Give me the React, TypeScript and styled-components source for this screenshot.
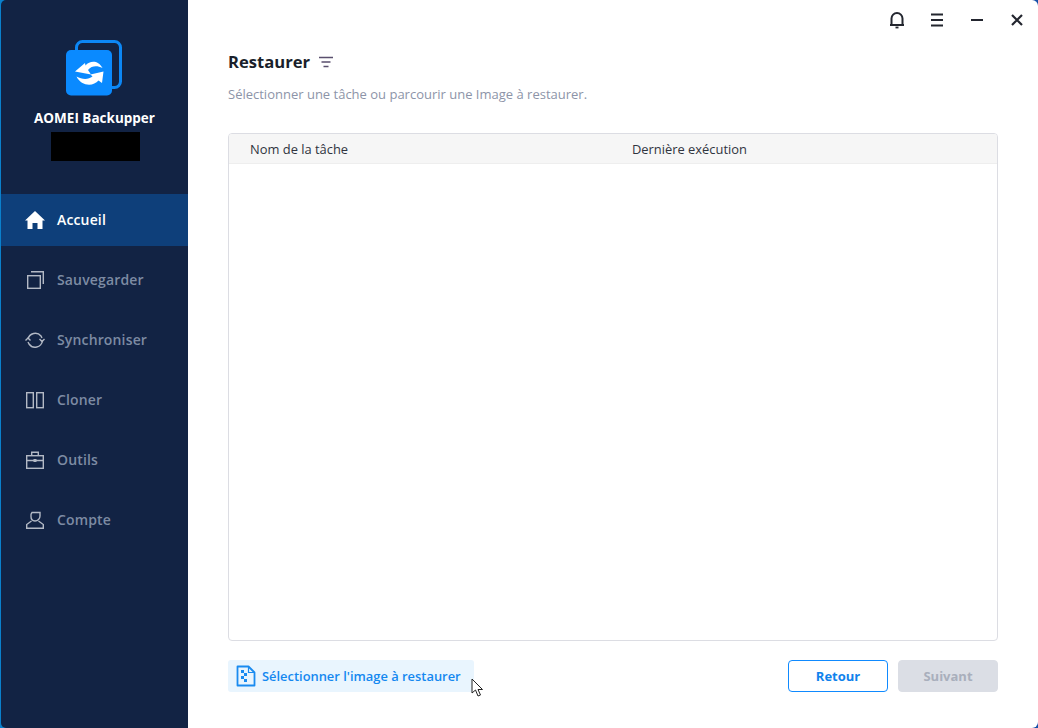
import React from "react";
import styled, { createGlobalStyle } from "styled-components";

const Global = createGlobalStyle`
  html, body { margin: 0; padding: 0; background: #0e4f96; }
  #root { width: 1038px; height: 728px; overflow: hidden; }
  * { box-sizing: border-box; }
`;

const Windowed = styled.div`
  width: 1038px;
  height: 728px;
  display: flex;
  font-family: "Open Sans", "Noto Sans", sans-serif;
  background: linear-gradient(90deg, #0a80cc 0%, #1650a8 100%);
`;

const Sidebar = styled.aside`
  width: 187px;
  height: 728px;
  margin-left: 1px;
  flex: none;
  background: #122344;
  border-top-left-radius: 5px;
  border-bottom-left-radius: 5px;
  display: flex;
  flex-direction: column;
`;

const Brand = styled.div`
  height: 194px;
  display: flex;
  flex-direction: column;
  align-items: center;
  padding-top: 40px;
`;

const LogoMark = styled.svg`
  width: 56px;
  height: 56px;
  flex: none;
  margin-right: 1px;
`;

const BrandName = styled.div`
  margin-top: 13px;
  color: #fff;
  font-size: 13.500px;
  line-height: 18px;
  font-weight: 700;
  white-space: nowrap;
`;

const Redacted = styled.div`
  width: 89px;
  height: 29px;
  margin-top: 5px;
  margin-left: 2px;
  background: #000;
`;

const Nav = styled.nav`
  display: flex;
  flex-direction: column;
  gap: 8px;
`;

const NavItem = styled.div<{ $active?: boolean }>`
  height: 52px;
  display: flex;
  align-items: center;
  padding-left: 24px;
  gap: 12px;
  background: ${(p) => (p.$active ? "#0e3f7a" : "transparent")};
  color: ${(p) => (p.$active ? "#ffffff" : "#7d8ba3")};
  font-size: 14px;
  letter-spacing: 0.150px;
  font-weight: 600;
`;

const NavLabel = styled.span`
  margin-bottom: 2px;
`;

const NavIcon = styled.svg`
  width: 20px;
  height: 20px;
  flex: none;
  fill: none;
  stroke: #b3b9c5;
  stroke-width: 1.400;
`;

const Main = styled.main`
  flex: 1;
  min-width: 0;
  height: 728px;
  background: #fff;
  border-radius: 0 6px 6px 0;
  display: flex;
  flex-direction: column;
  padding: 0 40px 36px 40px;
`;

const TitleBar = styled.div`
  height: 40px;
  margin-right: -40px;
  flex: none;
  display: flex;
  justify-content: flex-end;
  align-items: center;
  padding-right: 11px;
  gap: 20px;
`;

const BarIcon = styled.svg`
  width: 20px;
  height: 20px;
  fill: none;
  stroke: #23262f;
  stroke-width: 2;
`;

const Heading = styled.div`
  display: flex;
  align-items: center;
  gap: 9px;
  height: 24px;
  margin-top: 10px;
`;

const Title = styled.h1`
  margin: 0;
  font-size: 16.600px;
  line-height: 24px;
  font-weight: 700;
  color: #1a1f2b;
`;

const Subtitle = styled.p`
  margin: 11px 0 0;
  font-size: 13px;
  line-height: 18px;
  color: #8d94a8;
`;

const TableBox = styled.div`
  margin-top: 30px;
  flex: 1;
  min-height: 0;
  border: 1px solid #dcdde3;
  border-radius: 4px;
  display: flex;
  flex-direction: column;
`;

const TableHead = styled.div`
  height: 30px;
  flex: none;
  display: grid;
  grid-template-columns: 382px 1fr;
  align-items: center;
  padding-left: 21px;
  background: #f6f6f6;
  border-bottom: 1px solid #eeeeee;
  border-radius: 3px 3px 0 0;
  font-size: 12.900px;
  color: #30343e;
`;

const Footer = styled.div`
  margin-top: 19px;
  height: 32px;
  flex: none;
  display: flex;
  align-items: center;
`;

const ImageButton = styled.div`
  position: relative;
  width: 246px;
  height: 32px;
  display: flex;
  align-items: center;
  gap: 6px;
  padding-left: 8px;
  background: #e9f5fe;
  border-radius: 3px;
  color: #1488f0;
  font-size: 12.900px;
  font-weight: 600;
  white-space: nowrap;
`;

const Cursor = styled.svg`
  position: absolute;
  left: 243px;
  top: 18px;
  width: 14px;
  height: 20px;
`;

const Spacer = styled.div`
  flex: 1;
`;

const ActionButton = styled.div<{ $disabled?: boolean }>`
  width: 100px;
  height: 32px;
  margin-left: 10px;
  display: flex;
  align-items: center;
  justify-content: center;
  border-radius: 4px;
  font-size: 13px;
  font-weight: 700;
  border: 1px solid ${(p) => (p.$disabled ? "#dbdee5" : "#0f8aff")};
  background: ${(p) => (p.$disabled ? "#dbdee5" : "#fff")};
  color: ${(p) => (p.$disabled ? "#a9afbc" : "#0f82ec")};
`;

export default function App() {
  return (
    <Windowed>
      <Global />
      <Sidebar>
        <Brand>
          <LogoMark viewBox="0 0 56 56">
            <rect x="10.500" y="1.500" width="44" height="46" rx="6" fill="none" stroke="#0c87f5" strokeWidth="3" />
            <rect x="0" y="10" width="46" height="45.500" rx="5" fill="#0a8aff" />
            <path
              d="M9 31.500 L19 23 L19.500 25.500 C24 20.500 32 20 36.500 28 C31 25.500 26 25.500 22 30 L25 34.500 Z"
              fill="#fff"
            />
            <path
              d="M37.500 31.500 L36 43 L32.500 40.500 C27 47 15 46 10.500 36.500 C16 39.500 22 40 26.500 36.500 L24.500 34.500 Z"
              fill="#fff"
            />
          </LogoMark>
          <BrandName>AOMEI Backupper</BrandName>
          <Redacted />
        </Brand>
        <Nav>
          <NavItem $active>
            <NavIcon viewBox="0 0 20 20">
              <path
                d="M10 1 L20 10.500 H17.500 V19 H12.500 V13 H7.500 V19 H2.500 V10.500 H0 Z"
                fill="#fff"
                stroke="none"
              />
            </NavIcon>
            <NavLabel>Accueil</NavLabel>
          </NavItem>
          <NavItem>
            <NavIcon viewBox="0 0 20 20">
              <rect x="2.700" y="5.700" width="12.600" height="12.600" />
              <path d="M6 1.700 H18.300 V14" />
            </NavIcon>
            <NavLabel>Sauvegarder</NavLabel>
          </NavItem>
          <NavItem>
            <NavIcon viewBox="0 0 20 20">
              <path d="M3 9 A7.500 7.500 0 0 1 16 6 L17 8" />
              <path d="M17.500 11 A7.500 7.500 0 0 1 4 14 L3 12" />
              <path d="M0.500 10.500 L3 8 L5.500 10.500 M14.500 9 L17 11.500 L19.500 9" />
            </NavIcon>
            <NavLabel>Synchroniser</NavLabel>
          </NavItem>
          <NavItem>
            <NavIcon viewBox="0 0 20 20">
              <rect x="1.700" y="2.700" width="6.600" height="15" />
              <rect x="11.700" y="2.700" width="6.600" height="15" />
            </NavIcon>
            <NavLabel>Cloner</NavLabel>
          </NavItem>
          <NavItem>
            <NavIcon viewBox="0 0 20 20">
              <rect x="1.700" y="5.700" width="16.600" height="12.600" />
              <path d="M6.700 5.500 V2.200 H13.300 V5.500 M1.700 10.500 H18.300" />
              <rect x="8.500" y="9" width="3" height="3" fill="#b3b9c5" stroke="none" />
            </NavIcon>
            <NavLabel>Outils</NavLabel>
          </NavItem>
          <NavItem>
            <NavIcon viewBox="0 0 20 20">
              <path d="M7 2.500 H15 V6 A5 5 0 0 1 10 11 A4.500 4.500 0 0 1 6 6.500 A4.500 4.500 0 0 1 7 2.500 Z" />
              <path d="M6.500 11 L1.700 14.500 V18.300 H18.300 V14.500 L13.500 11" />
            </NavIcon>
            <NavLabel>Compte</NavLabel>
          </NavItem>
        </Nav>
      </Sidebar>
      <Main>
        <TitleBar>
          <BarIcon viewBox="0 0 20 20">
            <path d="M4.500 15 V8.500 A5.500 5.500 0 0 1 15.500 8.500 V15" strokeWidth="2" />
            <path d="M3 15 H17" strokeWidth="2" />
            <path d="M8.500 17.500 H11.500" strokeWidth="1.800" />
          </BarIcon>
          <BarIcon viewBox="0 0 20 20">
            <path d="M4 4.500 H16 M4 10 H16 M4 15.500 H16" />
          </BarIcon>
          <BarIcon viewBox="0 0 20 20">
            <path d="M4 10 H16" />
          </BarIcon>
          <BarIcon viewBox="0 0 20 20">
            <path d="M5 5 L15 15 M15 5 L5 15" strokeWidth="2.200" />
          </BarIcon>
        </TitleBar>
        <Heading>
          <Title>Restaurer</Title>
          <svg width="14" height="12" viewBox="0 0 14 12">
            <path d="M0 1.500 H14 M2.500 6 H11.500 M4.500 10.500 H9.500" stroke="#5a4f6e" strokeWidth="1.600" />
          </svg>
        </Heading>
        <Subtitle>Sélectionner une tâche ou parcourir une Image à restaurer.</Subtitle>
        <TableBox>
          <TableHead>
            <span>Nom de la tâche</span>
            <span>Dernière exécution</span>
          </TableHead>
        </TableBox>
        <Footer>
          <ImageButton>
            <svg width="20" height="22" viewBox="0 0 20 22" fill="none">
              <path
                d="M1.500 1.500 H12.500 L18.500 7.500 V20.500 H1.500 Z"
                stroke="#1a8bf0"
                strokeWidth="1.800"
                strokeLinejoin="round"
              />
              <path d="M12.500 1.500 V7.500 H18.500" stroke="#1a8bf0" strokeWidth="1.200" />
              <path d="M5 5 H8 V8 H5 Z M8 8 H11 V11 H8 Z M5 11 H8 V14 H5 Z M8 14 H11 V17 H8 Z" fill="#1a8bf0" />
            </svg>
            Sélectionner l'image à restaurer
            <Cursor viewBox="0 0 14 20">
              <path
                d="M1 1 V15 L4.500 12 L7 18 L9.500 17 L7 11.500 H11.500 Z"
                fill="#fff"
                stroke="#222"
                strokeWidth="1"
                strokeLinejoin="round"
              />
            </Cursor>
          </ImageButton>
          <Spacer />
          <ActionButton>Retour</ActionButton>
          <ActionButton $disabled>Suivant</ActionButton>
        </Footer>
      </Main>
    </Windowed>
  );
}
